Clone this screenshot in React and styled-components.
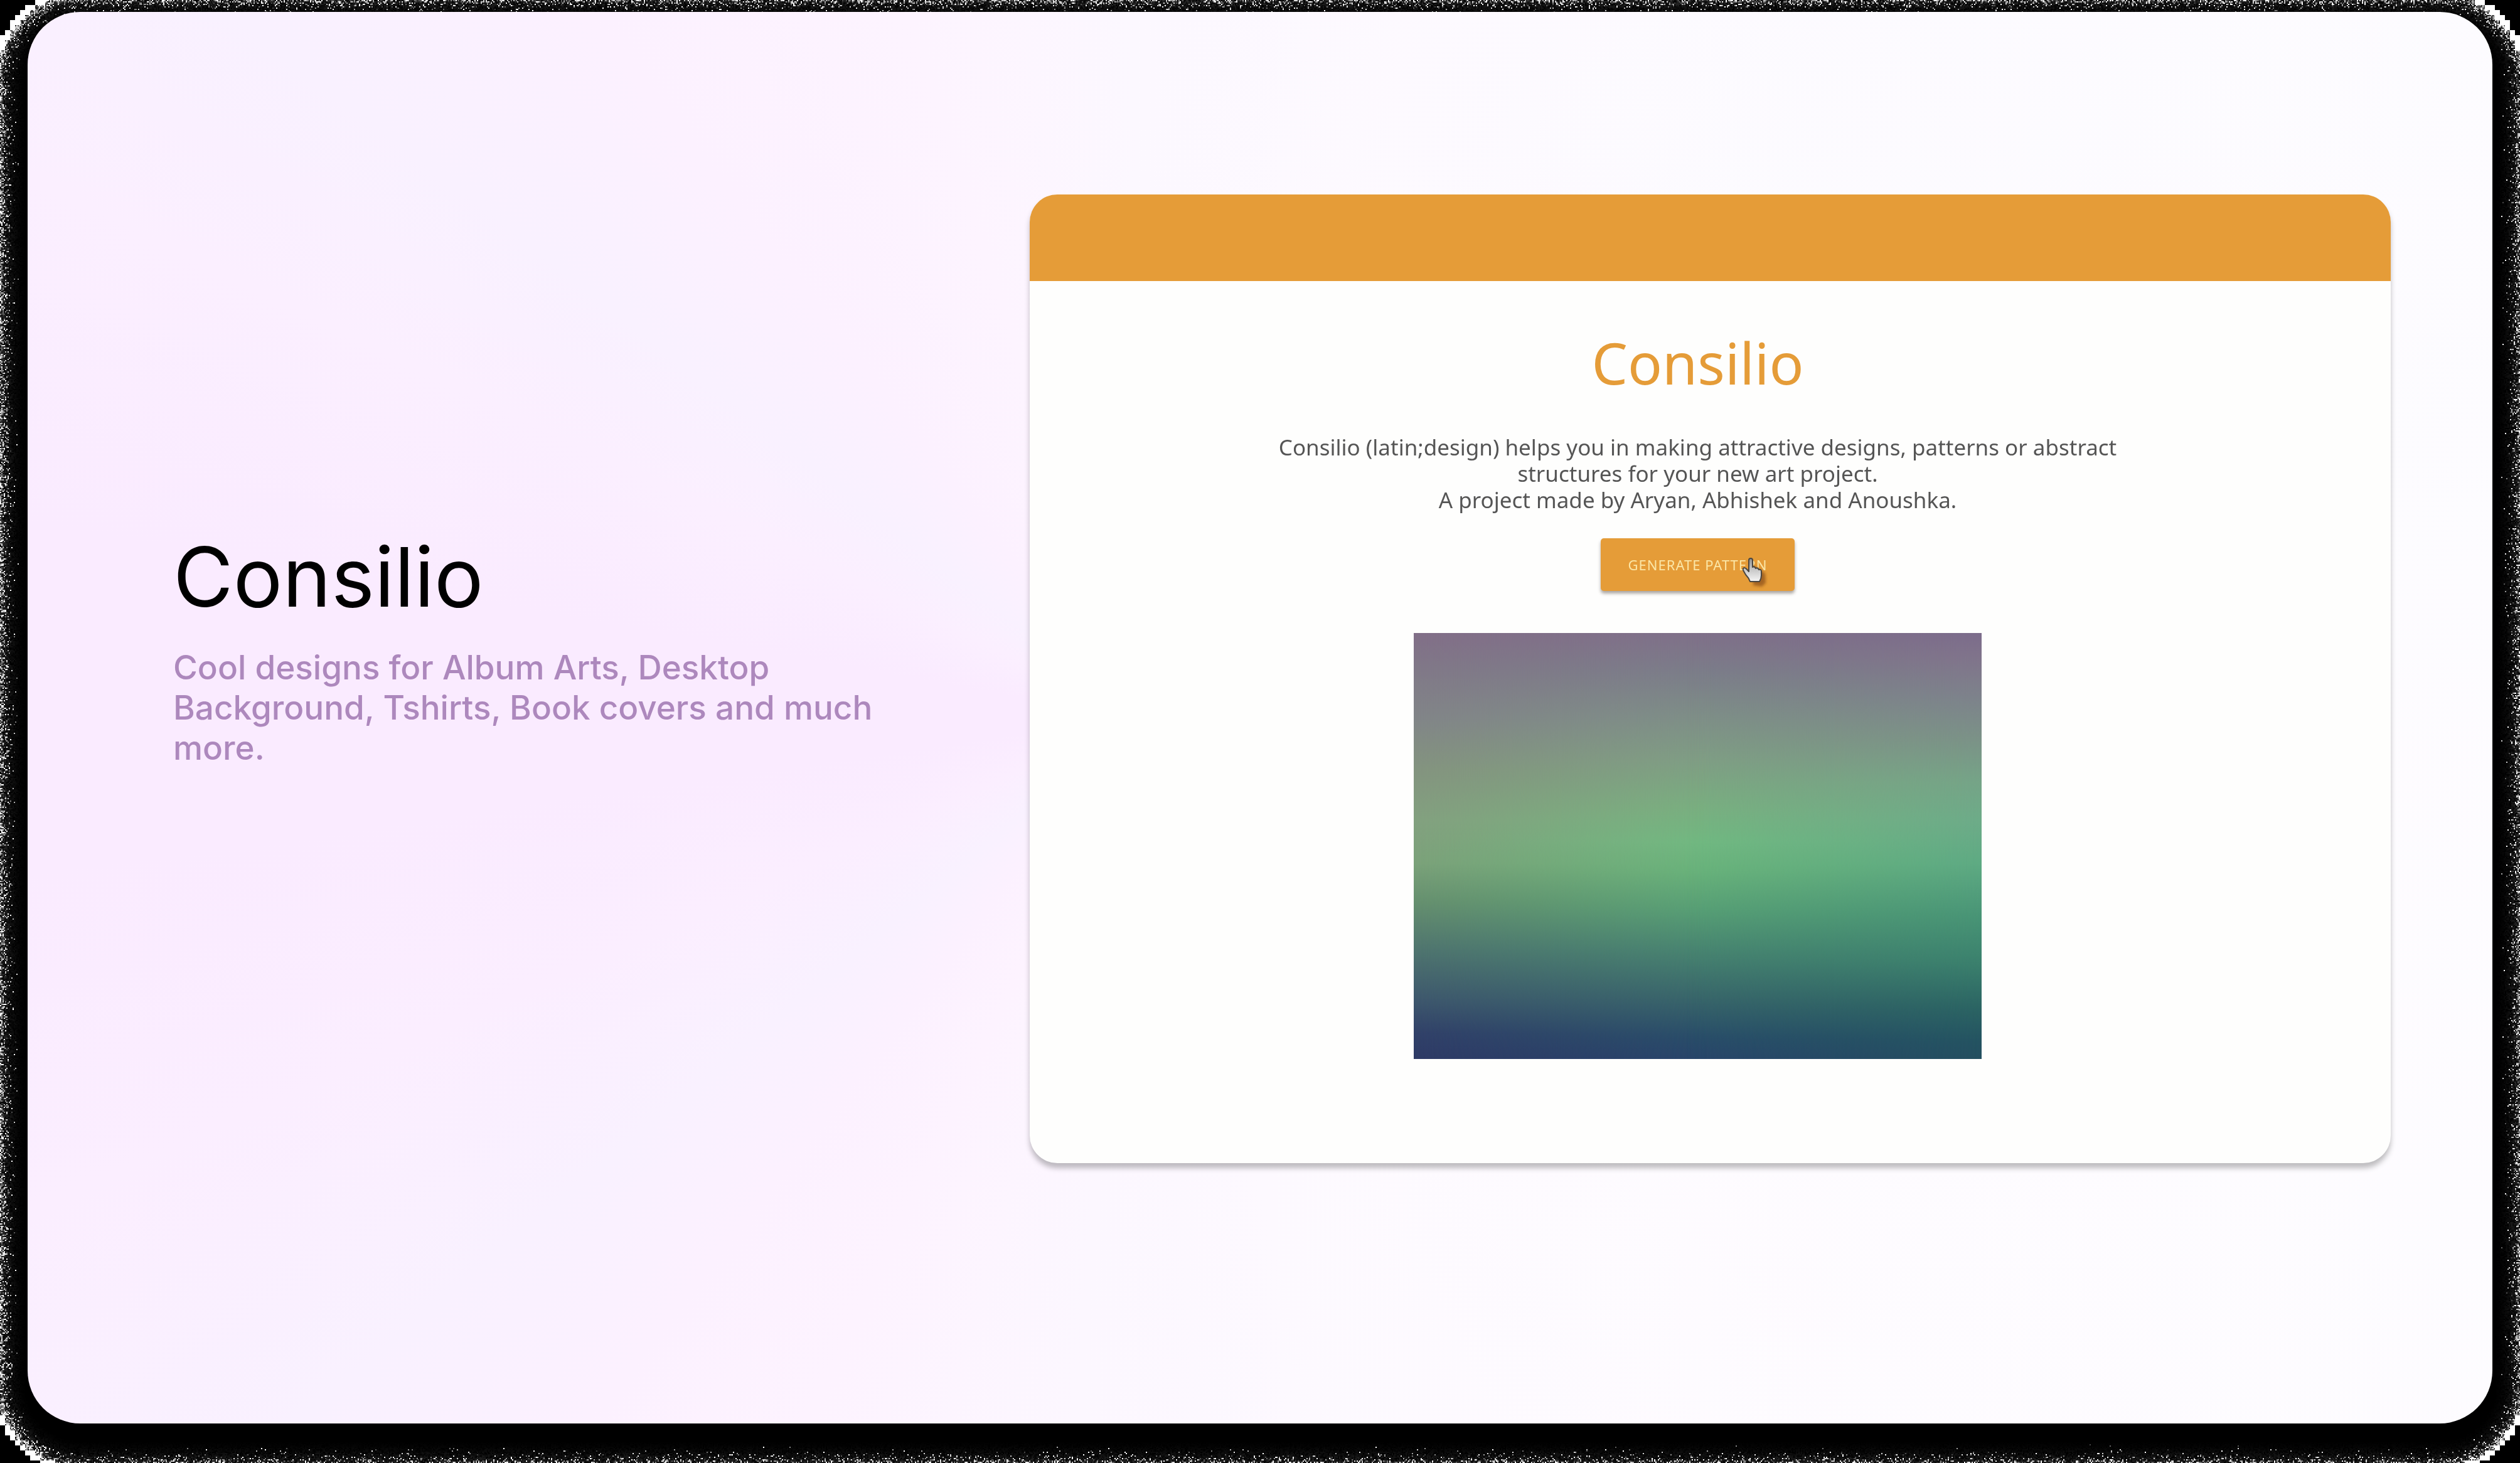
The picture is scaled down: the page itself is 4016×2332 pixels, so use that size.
import React, { useEffect, useRef } from "react";
import styled, { createGlobalStyle } from "styled-components";

const ORANGE = "#e59c38";

const GlobalStyle = createGlobalStyle`
  * { box-sizing: border-box; }
  body { margin: 0; background: #000; }
  h1, h2, p { margin: 0; font-weight: 400; }
`;

const Page = styled.div`
  position: relative;
  isolation: isolate;
  display: flex;
  min-height: 100vh;
  padding: 19px 44px 63px;
  font-family: Inter, "Liberation Sans", sans-serif;
`;

const GrainCanvas = styled.canvas`
  position: absolute;
  inset: 0;
  z-index: -1;
  width: 100%;
  height: 100%;
`;

const Slide = styled.main`
  flex: 1;
  display: grid;
  grid-template-columns: minmax(0, 1365fr) minmax(0, 2169fr);
  align-items: start;
  padding: 291px 162px 120px 232px;
  border-radius: 84px;
  background:
    linear-gradient(to right, rgba(252, 244, 255, 0) 45%, rgba(253, 252, 255, 0.8) 100%),
    conic-gradient(
      from 0deg at 45% 50%,
      #fcf8ff 0deg,
      #fdf9ff 20deg,
      #fcfaff 60deg,
      #fefcff 110deg,
      #fdf9ff 165deg,
      #fcf7ff 185deg,
      #fdf3ff 205deg,
      #fcf1ff 218deg,
      #f9f1ff 230deg,
      #fbeeff 246deg,
      #faebff 262deg,
      #faebff 280deg,
      #fbefff 296deg,
      #f9f1ff 308deg,
      #fcf1ff 322deg,
      #fdf4ff 342deg,
      #fcf8ff 360deg
    );
`;

const Intro = styled.section`
  display: flex;
  flex-direction: column;
  gap: 32px;
  padding-top: 530px;
`;

const Title = styled.h1`
  color: #000;
  font-size: 131px;
  line-height: 160px;
`;

const Tagline = styled.p`
  max-width: 1140px;
  color: #ad88bd;
  font-size: 53px;
  font-weight: 500;
  line-height: 64px;
`;

const Preview = styled.article`
  overflow: hidden;
  border-radius: 44px;
  background: #fefefd;
  box-shadow: 0 8px 8px rgba(0, 0, 0, 0.25);
  font-family: "Noto Sans", "Open Sans", sans-serif;
`;

const PreviewBar = styled.header`
  height: 138px;
  background: ${ORANGE};
`;

const PreviewBody = styled.div`
  display: flex;
  flex-direction: column;
  align-items: center;
  padding: 70px 40px 166px 0;
  text-align: center;
`;

const PreviewTitle = styled.h2`
  color: ${ORANGE};
  font-size: 91px;
  line-height: 120px;
`;

const Description = styled.p`
  max-width: 1400px;
  margin-top: 54px;
  color: #555;
  font-size: 35px;
  line-height: 42px;
`;

const GenerateButton = styled.button`
  position: relative;
  height: 84px;
  margin-top: 40px;
  padding: 0 44px;
  border: 0;
  border-radius: 5px;
  background: ${ORANGE};
  box-shadow: 0 4px 5px rgba(70, 60, 50, 0.45);
  color: #fbe6a6;
  font-family: inherit;
  font-size: 22px;
  letter-spacing: 1px;
`;

const Pointer = styled.svg`
  position: absolute;
  top: 31px;
  right: 42px;
  width: 42px;
  height: 50px;
`;

const Pattern = styled.div`
  position: relative;
  width: 905px;
  max-width: 100%;
  aspect-ratio: 4 / 3;
  margin-top: 67px;
  background: linear-gradient(
    #826f88 0%, #817888 8%, #828588 20%, #84947f 32%, #83a17f 44%, #7ba27a 54%,
    #66906f 63%, #4e736f 75%, #3e586d 86%, #314169 94%, #2e3a66 100%
  );

  &::before,
  &::after {
    content: "";
    position: absolute;
    inset: 0;
  }

  &::before {
    background: linear-gradient(
      #7f7089 0%, #7b7d89 9%, #7e8f87 20%, #7f9e84 30%, #79af80 41%, #71b981 49%,
      #68b27a 56%, #579f75 65%, #478370 75%, #38656a 86%, #294d69 95%, #28456a 100%
    );
    mask-image: linear-gradient(to right, transparent, #000 52%);
  }

  &::after {
    background: linear-gradient(
      #7c6c8b 0%, #80748b 6%, #7d828b 15%, #7b9287 25%, #75a487 35%, #6dab88 44%,
      #5eaa83 54%, #499576 66%, #3b816d 77%, #2b6463 88%, #245361 96%, #244f60 100%
    );
    mask-image: linear-gradient(to right, transparent 48%, #000);
  }
`;

const SHADOW_OFFSET = 22;
const CORNER = 84;
const BLOCK = 8;

function seededRandom(seed) {
  let state = seed;
  return () => {
    state = (state * 1664525 + 1013904223) >>> 0;
    return state / 4294967296;
  };
}

// Distance from a point to the slide's outline, lowered by the shadow offset.
function edgeDistance(x, y, width, height) {
  const left = 44 + CORNER;
  const right = width - 44 - CORNER;
  const top = 19 + SHADOW_OFFSET + CORNER;
  const bottom = height - 63 + SHADOW_OFFSET - CORNER;
  const dx = Math.max(left - x, x - right, 0);
  const dy = Math.max(top - y, y - bottom, 0);
  return Math.hypot(dx, dy) - CORNER;
}

function paintGrain(canvas) {
  const width = canvas.clientWidth;
  const height = canvas.clientHeight;
  if (!width || !height) return;
  canvas.width = width;
  canvas.height = height;
  const context = canvas.getContext("2d");
  const random = seededRandom(7);
  context.fillStyle = "#000";
  context.fillRect(0, 0, width, height);

  for (let y = 0; y < height; y += 2) {
    const inRows = y < 130 || y > height - 150;
    for (let x = 0; x < width; x += 2) {
      if (!inRows && x === 46) x = width - 46;
      const distance = edgeDistance(x, y, width, height);
      if (distance < 6) continue;
      const blockX = Math.floor(x / BLOCK) * BLOCK + BLOCK / 2;
      const blockY = Math.floor(y / BLOCK) * BLOCK + BLOCK / 2;
      const blockDistance = edgeDistance(blockX, blockY, width, height);
      if (blockDistance > 57) continue;
      let level;
      if (blockDistance > 48) {
        level = 255;
      } else {
        const depth = Math.min(distance / 46, 1);
        const roll = random();
        const chance = Math.pow(depth, 5) * 0.8;
        level = roll < chance ? 60 + random() * 220 : random() * 62 * depth * depth;
      }
      const shade = Math.min(255, Math.round(level));
      context.fillStyle = `rgb(${shade},${shade},${shade})`;
      context.fillRect(x, y, 2, 2);
    }
  }
}

function Grain() {
  const ref = useRef(null);
  useEffect(() => {
    const paint = () => paintGrain(ref.current);
    paint();
    window.addEventListener("resize", paint);
    return () => window.removeEventListener("resize", paint);
  }, []);
  return <GrainCanvas ref={ref} aria-hidden="true" />;
}

function HandPointer() {
  return (
    <Pointer viewBox="0 0 42 50" aria-hidden="true">
      <defs>
        <linearGradient id="hand" x1="0" y1="0" x2="0" y2="1">
          <stop offset="0" stopColor="#8f8f8f" />
          <stop offset="0.45" stopColor="#c4c4c4" />
          <stop offset="1" stopColor="#f6f6f6" />
        </linearGradient>
        <filter id="soft" x="-30%" y="-30%" width="160%" height="160%">
          <feGaussianBlur stdDeviation="2" />
        </filter>
      </defs>
      <path
        d="M17 12 L37 25 L38 40 L32 46 L18 44 Z"
        fill="#94561c"
        opacity="0.8"
        filter="url(#soft)"
      />
      <path
        d="M11 4 Q11 1 14 1 Q17 1 17 4 V15 Q20 13 22 17 Q25 15 27 19 Q31 18 31 22 V28 Q31 33 28 38 H13 Q11 32 6 27 L2 20 Q1 16 4 16 Q6 16 11 22 Z"
        fill="url(#hand)"
        stroke="#4b463f"
        strokeWidth="2"
        strokeLinejoin="round"
      />
    </Pointer>
  );
}

export default function App() {
  return (
    <>
      <GlobalStyle />
      <Page>
        <Grain />
        <Slide>
          <Intro>
            <Title>Consilio</Title>
            <Tagline>
              Cool designs for Album Arts, Desktop Background, Tshirts, Book covers and much more.
            </Tagline>
          </Intro>
          <Preview>
            <PreviewBar />
            <PreviewBody>
              <PreviewTitle>Consilio</PreviewTitle>
              <Description>
                Consilio (latin;design) helps you in making attractive designs, patterns or abstract
                <br />
                structures for your new art project.
                <br />A project made by Aryan, Abhishek and Anoushka.
              </Description>
              <GenerateButton type="button">
                GENERATE PATTERN
                <HandPointer />
              </GenerateButton>
              <Pattern role="img" aria-label="Generated pattern" />
            </PreviewBody>
          </Preview>
        </Slide>
      </Page>
    </>
  );
}
